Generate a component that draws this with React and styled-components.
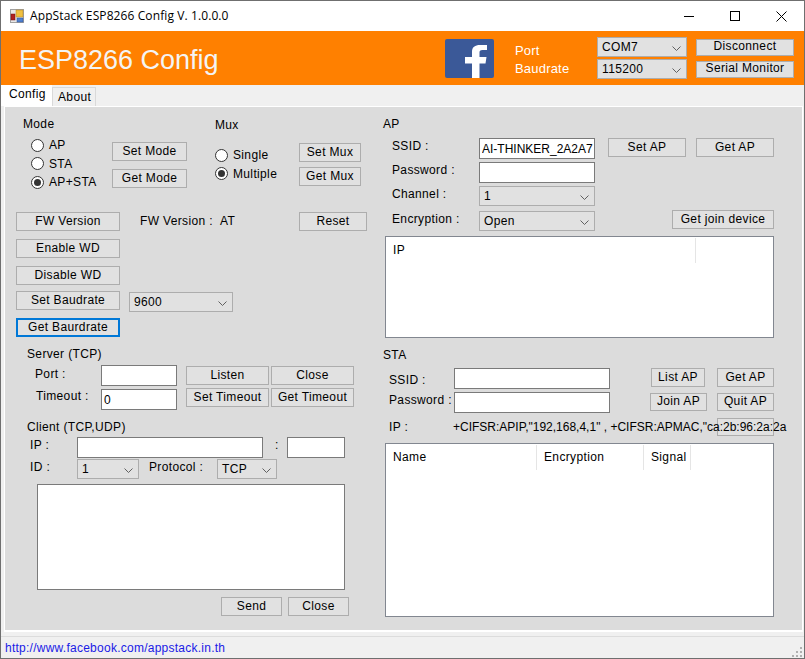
import React from "react";
import styled, { createGlobalStyle } from "styled-components";

const GlobalStyle = createGlobalStyle`
  html, body {
    margin: 0;
    padding: 0;
    background: #fff;
    overflow: hidden;
  }
  * {
    box-sizing: border-box;
  }
`;

const Window = styled.div`
  display: flex;
  flex-direction: column;
  width: 805px;
  height: 659px;
  border: 1px solid #6f6f6f;
  background: #f0f0f0;
  color: #000;
  font-family: "Liberation Sans", Arial, sans-serif;
  font-size: 12px;
  line-height: 16px;
  letter-spacing: 0.35px;
`;

const TitleBar = styled.div`
  display: flex;
  align-items: center;
  height: 30px;
  flex: none;
  padding-left: 9px;
  background: #fff;
`;

const TitleText = styled.div`
  margin-left: 6px;
  font-family: "Open Sans", "Noto Sans", sans-serif;
  font-size: 12px;
  letter-spacing: 0.1px;
`;

const WindowButtons = styled.div`
  display: flex;
  margin-left: auto;
`;

const WindowButton = styled.div`
  display: flex;
  align-items: center;
  justify-content: center;
  width: 46px;
  height: 30px;
`;

const Header = styled.div`
  display: flex;
  align-items: center;
  flex: none;
  height: 54px;
  padding-left: 18px;
  background: #ff8000;
`;

const HeaderTitle = styled.div`
  width: 426px;
  margin-top: 4px;
  color: #f4f4f4;
  font-size: 27px;
  line-height: 32px;
  letter-spacing: 0;
`;

const Logo = styled.svg`
  display: block;
  flex: none;
  width: 49px;
  height: 39px;
`;

const HeaderLabels = styled.div`
  width: 82px;
  margin-left: 21px;
  padding-top: 4px;
  color: #fff;
  font-size: 13px;
  line-height: 18px;
  letter-spacing: 0.2px;
`;

const Stack = styled.div`
  display: flex;
  flex-direction: column;
  gap: ${(p) => p.$gap || 0}px;
  margin-left: ${(p) => p.$ml || 0}px;
  margin-top: ${(p) => p.$mt || 0}px;
`;

const TabStrip = styled.div`
  display: flex;
  align-items: flex-end;
  flex: none;
  height: 21px;
`;

const Tab = styled.div`
  height: ${(p) => (p.$active ? 21 : 19)}px;
  width: ${(p) => (p.$active ? 51 : 44)}px;
  padding-left: ${(p) => (p.$active ? 8 : 5)}px;
  padding-top: 1px;
  background: ${(p) => (p.$active ? "#fff" : "#f0f0f0")};
  border: ${(p) => (p.$active ? "none" : "1px solid #d9d9d9")};
  border-bottom: none;
`;

const TabPage = styled.div`
  display: flex;
  flex: none;
  height: 526px;
  margin: 0 1px 4px 3px;
  border: 1px solid #fff;
  border-bottom-width: 2px;
  background: #dcdcdc;
`;

const LeftColumn = styled.div`
  flex: none;
  width: 370px;
  padding-top: 9px;
`;

const RightColumn = styled.div`
  flex: none;
  width: 427px;
  padding-top: 9px;
  padding-left: 8px;
`;

const ModeMuxRow = styled.div`
  display: flex;
  height: 96px;
  padding-left: 18px;
`;

const ModeGroup = styled.div`
  flex: none;
  width: 192px;
`;

const MuxGroup = styled.div`
  flex: none;
  margin-top: 1px;
`;

const GroupBody = styled.div`
  display: flex;
`;

const RadioList = styled.div`
  flex: none;
  width: ${(p) => p.$w}px;
  margin-top: ${(p) => p.$mt}px;
  margin-left: ${(p) => p.$ml}px;
`;

const RadioRow = styled.div`
  display: flex;
  align-items: center;
  gap: 5px;
  height: 18.5px;
`;

const RadioDot = styled.span`
  display: flex;
  align-items: center;
  justify-content: center;
  flex: none;
  width: 13px;
  height: 13px;
  border: 1px solid #333;
  border-radius: 50%;
  background: #fff;

  &::after {
    content: "";
    display: ${(p) => (p.$checked ? "block" : "none")};
    width: 7px;
    height: 7px;
    border-radius: 50%;
    background: #333;
  }
`;

const Btn = styled.div`
  display: flex;
  align-items: center;
  justify-content: center;
  flex: none;
  width: ${(p) => p.$w}px;
  height: ${(p) => p.$h || 19}px;
  margin-top: ${(p) => p.$mt || 0}px;
  margin-left: ${(p) => p.$ml || 0}px;
  padding-bottom: 2px;
  border: ${(p) => (p.$focused ? "2px solid #0078d7" : "1px solid #adadad")};
  background: #e1e1e1;
  white-space: nowrap;
`;

const Field = styled.input`
  display: block;
  flex: none;
  width: ${(p) => p.$w}px;
  height: 21px;
  margin-top: ${(p) => p.$mt || 0}px;
  margin-left: ${(p) => p.$ml || 0}px;
  padding: 0 1px 0 2px;
  border: 1px solid #7a7a7a;
  border-radius: 0;
  outline: none;
  background: #fff;
  color: #000;
  font-family: inherit;
  font-size: 12px;
  letter-spacing: 0;
`;

const Combo = styled.div`
  display: flex;
  align-items: center;
  justify-content: space-between;
  flex: none;
  width: ${(p) => p.$w}px;
  height: 20px;
  margin-top: ${(p) => p.$mt || 0}px;
  margin-left: ${(p) => p.$ml || 0}px;
  padding: 0 5px 0 4px;
  border: 1px solid #adadad;
  background: #e1e1e1;
`;

const Chevron = styled.svg`
  display: block;
  flex: none;
  width: 9px;
  height: 5px;
  margin-top: 2px;
  fill: none;
  stroke: #606060;
  stroke-width: 1;
`;

const Text = styled.div`
  flex: none;
  width: ${(p) => (p.$w ? `${p.$w}px` : "auto")};
  margin-top: ${(p) => p.$mt || 0}px;
  margin-left: ${(p) => p.$ml || 0}px;
  white-space: nowrap;
`;

const Row = styled.div`
  display: flex;
  align-items: flex-start;
  margin-top: ${(p) => p.$mt || 0}px;
  padding-left: ${(p) => p.$pl || 0}px;
`;

const ClientBox = styled.textarea`
  display: block;
  width: 308px;
  height: 106px;
  margin: 5px 0 0 10px;
  border: 1px solid #7a7a7a;
  border-radius: 0;
  outline: none;
  background: #fff;
  resize: none;
`;

const ListBox = styled.div`
  width: 389px;
  height: ${(p) => p.$h}px;
  margin-top: ${(p) => p.$mt || 0}px;
  margin-left: 2px;
  border: 1px solid #828790;
  background: #fff;
`;

const ListHead = styled.div`
  display: flex;
  height: 25px;
  margin-top: 1px;
`;

const ListCol = styled.div`
  flex: none;
  width: ${(p) => p.$w}px;
  padding: 4px 0 0 7px;
  border-right: 1px solid #e5e5e5;
`;

const IpRow = styled.div`
  position: relative;
  display: flex;
  width: 404px;
  height: 18px;
  margin-top: 5px;
  padding: 1px 0 0 6px;
`;

const IpBox = styled.div`
  position: absolute;
  top: 0;
  left: 334px;
  width: 57px;
  height: 18px;
  border: 1px solid #adadad;
  background: #e1e1e1;
`;

const IpLabel = styled.div`
  position: relative;
  flex: none;
  width: 24px;
`;

const IpValue = styled.div`
  position: relative;
  margin-left: 40px;
  letter-spacing: 0;
  white-space: nowrap;
`;

const StatusBar = styled.div`
  display: flex;
  align-items: center;
  justify-content: space-between;
  flex: none;
  height: 22px;
  padding: 0 1px 0 4px;
  border-top: 1px solid #dcdcdc;
  background: #f0f0f0;
`;

const StatusLink = styled.a`
  color: #1a1ae6;
  text-decoration: none;
  letter-spacing: 0.25px;
`;

const Grip = styled.svg`
  display: block;
  align-self: flex-end;
  width: 12px;
  height: 12px;
  fill: #b0b0b0;
`;

const Arrow = () => (
  <Chevron viewBox="0 0 9 5">
    <polyline points="0.5,0.5 4.5,4.5 8.5,0.5" />
  </Chevron>
);

const Select = ({ value, ...rest }) => (
  <Combo {...rest}>
    <span>{value}</span>
    <Arrow />
  </Combo>
);

const Radio = ({ label, checked }) => (
  <RadioRow>
    <RadioDot $checked={checked} />
    {label}
  </RadioRow>
);

const App = () => (
  <Window>
    <GlobalStyle />
    <TitleBar>
      <svg width="14" height="14" viewBox="0 0 14 14">
        <rect x="0.5" y="0.5" width="13" height="13" fill="#e8e8e8" stroke="#a0a0a0" />
        <rect x="1" y="5" width="4" height="6" fill="#b02020" stroke="#701010" strokeWidth="0.5" />
        <rect x="6" y="1" width="7" height="7" fill="#f0c040" stroke="#b08020" strokeWidth="0.5" />
        <rect x="7" y="9" width="6" height="4" fill="#4f80d0" stroke="#305090" strokeWidth="0.5" />
      </svg>
      <TitleText>AppStack ESP8266 Config V. 1.0.0.0</TitleText>
      <WindowButtons>
        <WindowButton>
          <svg width="10" height="10" viewBox="0 0 10 10" stroke="#000">
            <line x1="0" y1="5.5" x2="10" y2="5.5" />
          </svg>
        </WindowButton>
        <WindowButton>
          <svg width="10" height="10" viewBox="0 0 10 10" fill="none" stroke="#000">
            <rect x="0.5" y="0.5" width="9" height="9" />
          </svg>
        </WindowButton>
        <WindowButton>
          <svg width="11" height="11" viewBox="0 0 11 11" stroke="#000">
            <line x1="0.5" y1="0.5" x2="10.5" y2="10.5" />
            <line x1="10.5" y1="0.5" x2="0.5" y2="10.5" />
          </svg>
        </WindowButton>
      </WindowButtons>
    </TitleBar>

    <Header>
      <HeaderTitle>ESP8266 Config</HeaderTitle>
      <Logo viewBox="0 0 49 39">
        <rect width="49" height="39" rx="2" fill="#3b5998" />
        <path
          d="M27 39V24.500H20V18H27V13C27 8 30 6 35 6H42V11H37.500C35 11 34.500 12 34.500 13.500V18H41.500L40.500 24.500H34.500V39Z"
          fill="#fff"
        />
      </Logo>
      <HeaderLabels>
        <div>Port</div>
        <div>Baudrate</div>
      </HeaderLabels>
      <Stack $gap={2}>
        <Select $w={90} value="COM7" />
        <Select $w={90} value="115200" />
      </Stack>
      <Stack $gap={5} $ml={9}>
        <Btn $w={98} $h={17}>Disconnect</Btn>
        <Btn $w={98} $h={17}>Serial Monitor</Btn>
      </Stack>
    </Header>

    <TabStrip>
      <Tab $active>Config</Tab>
      <Tab>About</Tab>
    </TabStrip>

    <TabPage>
      <LeftColumn>
        <ModeMuxRow>
          <ModeGroup>
            <div>Mode</div>
            <GroupBody>
              <RadioList $w={81} $mt={4} $ml={8}>
                <Radio label="AP" />
                <Radio label="STA" />
                <Radio label="AP+STA" checked />
              </RadioList>
              <Stack $gap={8} $mt={10}>
                <Btn $w={75}>Set Mode</Btn>
                <Btn $w={75}>Get Mode</Btn>
              </Stack>
            </GroupBody>
          </ModeGroup>
          <MuxGroup>
            <div>Mux</div>
            <GroupBody>
              <RadioList $w={84} $mt={13} $ml={0}>
                <Radio label="Single" />
                <Radio label="Multiple" checked />
              </RadioList>
              <Stack $gap={5} $mt={10}>
                <Btn $w={62}>Set Mux</Btn>
                <Btn $w={62}>Get Mux</Btn>
              </Stack>
            </GroupBody>
          </MuxGroup>
        </ModeMuxRow>

        <Row $pl={11}>
          <Btn $w={104}>FW Version</Btn>
          <Text $w={80} $ml={20} $mt={1}>FW Version :</Text>
          <Text $w={79} $mt={1}>AT</Text>
          <Btn $w={68}>Reset</Btn>
        </Row>
        <Row $pl={11} $mt={8}>
          <Btn $w={104}>Enable WD</Btn>
        </Row>
        <Row $pl={11} $mt={8}>
          <Btn $w={104}>Disable WD</Btn>
        </Row>
        <Row $pl={11} $mt={6}>
          <Btn $w={104}>Set Baudrate</Btn>
          <Select $w={104} $ml={9} $mt={1} value="9600" />
        </Row>
        <Row $pl={11} $mt={6}>
          <Btn $w={104} $focused>Get Baurdrate</Btn>
        </Row>

        <Row $pl={22} $mt={9}>Server (TCP)</Row>
        <Row $pl={30} $mt={3}>
          <Text $w={66} $mt={1}>Port :</Text>
          <Field $w={76} readOnly />
          <Btn $w={83} $ml={9} $mt={1}>Listen</Btn>
          <Btn $w={83} $ml={2} $mt={1}>Close</Btn>
        </Row>
        <Row $pl={31} $mt={2}>
          <Text $w={65}>Timeout :</Text>
          <Field $w={76} $mt={1} readOnly value="0" />
          <Btn $w={83} $ml={9}>Set Timeout</Btn>
          <Btn $w={83} $ml={2}>Get Timeout</Btn>
        </Row>

        <Row $pl={22} $mt={9}>Client (TCP,UDP)</Row>
        <Row $pl={25} $mt={2}>
          <Text $w={47}>IP :</Text>
          <Field $w={186} readOnly />
          <Text $w={12} $ml={12}>:</Text>
          <Field $w={58} readOnly />
        </Row>
        <Row $pl={25} $mt={1}>
          <Text $w={47}>ID :</Text>
          <Select $w={62} value="1" />
          <Text $w={68} $ml={10}>Protocol :</Text>
          <Select $w={60} value="TCP" />
        </Row>
        <Row $pl={22}>
          <ClientBox readOnly />
        </Row>
        <Row $pl={216} $mt={7}>
          <Btn $w={61}>Send</Btn>
          <Btn $w={61} $ml={6}>Close</Btn>
        </Row>
      </LeftColumn>

      <RightColumn>
        <div>AP</div>
        <Row $pl={9} $mt={6}>
          <Text $w={87}>SSID :</Text>
          <Field $w={116} readOnly value="AI-THINKER_2A2A7" />
          <Btn $w={78} $ml={13}>Set AP</Btn>
          <Btn $w={78} $ml={10}>Get AP</Btn>
        </Row>
        <Row $pl={9} $mt={3}>
          <Text $w={87}>Password :</Text>
          <Field $w={116} readOnly />
        </Row>
        <Row $pl={9} $mt={3}>
          <Text $w={87}>Channel :</Text>
          <Select $w={116} value="1" />
        </Row>
        <Row $pl={9} $mt={4}>
          <Text $w={87} $mt={1}>Encryption :</Text>
          <Select $w={116} $mt={1} value="Open" />
          <Btn $w={102} $ml={77}>Get join device</Btn>
        </Row>
        <ListBox $h={102} $mt={5}>
          <ListHead>
            <ListCol $w={310}>IP</ListCol>
          </ListHead>
        </ListBox>

        <Text $mt={9}>STA</Text>
        <Row $pl={6} $mt={5}>
          <Text $w={65} $mt={4}>SSID :</Text>
          <Field $w={156} readOnly />
          <Btn $w={54} $ml={41}>List AP</Btn>
          <Btn $w={57} $ml={12}>Get AP</Btn>
        </Row>
        <Row $pl={6} $mt={3}>
          <Text $w={65}>Password :</Text>
          <Field $w={156} readOnly />
          <Btn $w={57} $h={18} $ml={40} $mt={1}>Join AP</Btn>
          <Btn $w={57} $h={18} $ml={10} $mt={1}>Quit AP</Btn>
        </Row>
        <IpRow>
          <IpBox />
          <IpLabel>IP :</IpLabel>
          <IpValue>+CIFSR:APIP,"192,168,4,1" , +CIFSR:APMAC,"ca:2b:96:2a:2a</IpValue>
        </IpRow>
        <ListBox $h={174} $mt={7}>
          <ListHead>
            <ListCol $w={151}>Name</ListCol>
            <ListCol $w={107}>Encryption</ListCol>
            <ListCol $w={47}>Signal</ListCol>
          </ListHead>
        </ListBox>
      </RightColumn>
    </TabPage>

    <StatusBar>
      <StatusLink href="#">http://www.facebook.com/appstack.in.th</StatusLink>
      <Grip viewBox="0 0 12 12">
        <rect x="9" y="1" width="2" height="2" />
        <rect x="5" y="5" width="2" height="2" />
        <rect x="9" y="5" width="2" height="2" />
        <rect x="1" y="9" width="2" height="2" />
        <rect x="5" y="9" width="2" height="2" />
        <rect x="9" y="9" width="2" height="2" />
      </Grip>
    </StatusBar>
  </Window>
);

export default App;
